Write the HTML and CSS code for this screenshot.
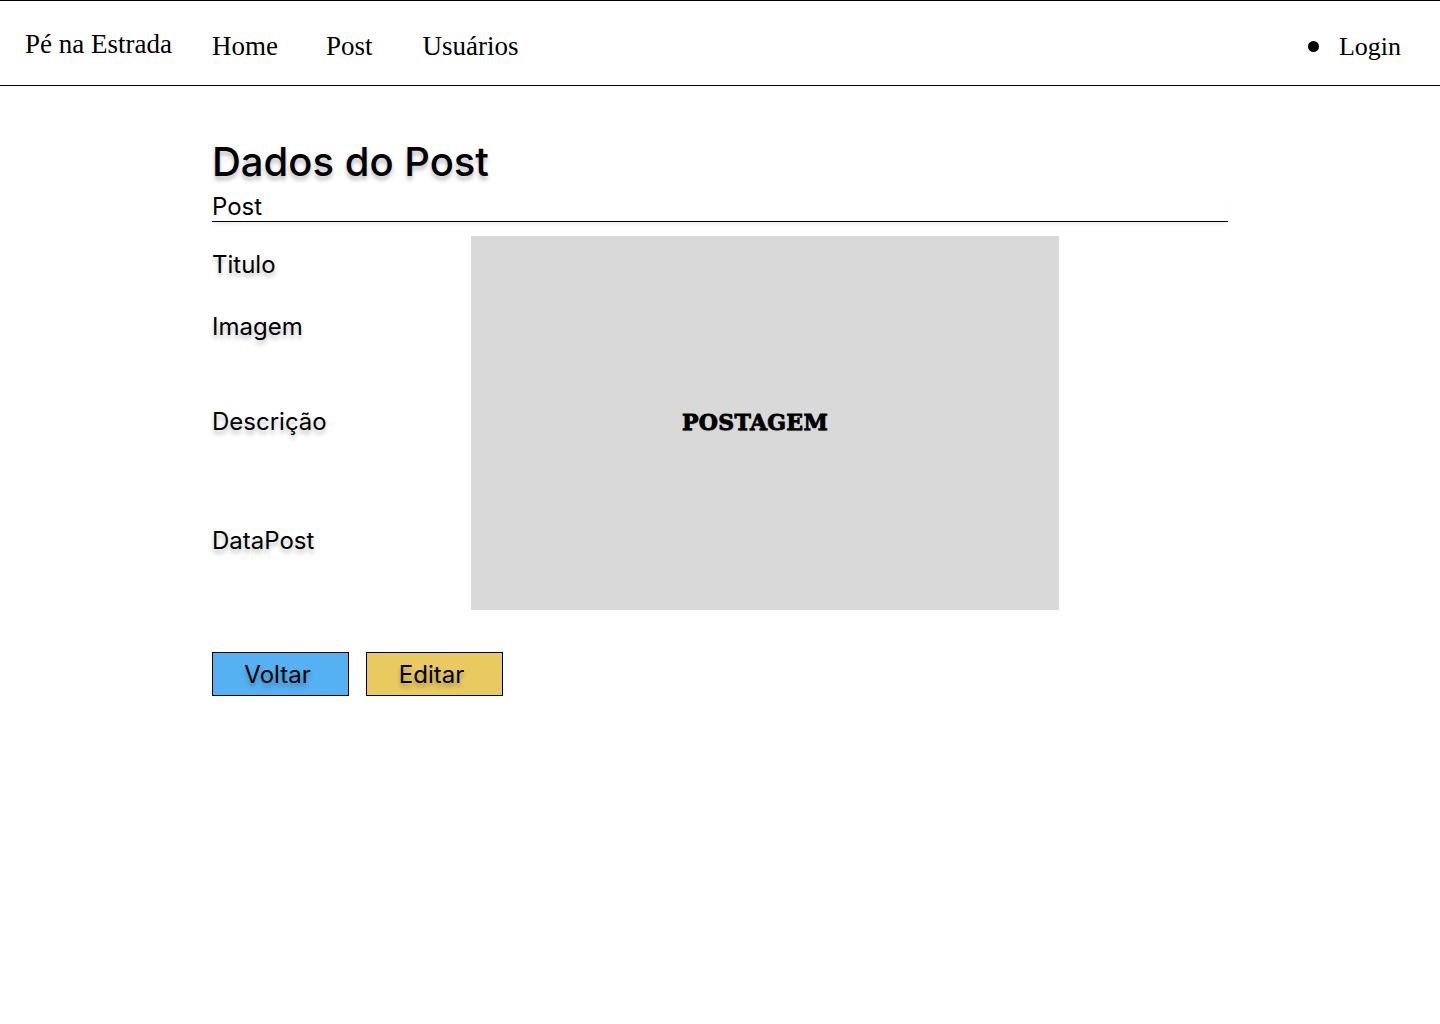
FILE: index.html
```html
<!DOCTYPE html>
<html lang="pt-BR">
<head>
<meta charset="utf-8">
<title>Dados do Post</title>
<link rel="stylesheet" href="styles.css">
</head>
<body>
<header class="topbar">
  <div class="brand">Pé na Estrada</div>
  <nav class="nav">
    <a class="nav-link" href="#">Home</a>
    <a class="nav-link" href="#">Post</a>
    <a class="nav-link" href="#">Usuários</a>
  </nav>
  <div class="login"><span class="dot"></span><span>Login</span></div>
</header>
<main class="content">
  <h1 class="title">Dados do Post</h1>
  <div class="section">Post</div>
  <div class="details">
    <div class="labels">
      <div class="label l-titulo">Titulo</div>
      <div class="label l-imagem">Imagem</div>
      <div class="label l-desc">Descrição</div>
      <div class="label l-data">DataPost</div>
    </div>
    <div class="image-box"><span class="image-text">POSTAGEM</span></div>
  </div>
  <div class="actions">
    <button class="btn btn-back">Voltar</button>
    <button class="btn btn-edit">Editar</button>
  </div>
</main>
</body>
</html>
```
FILE: styles.css
```css
html, body {
  margin: 0;
  padding: 0;
  background: #ffffff;
}
body {
  font-family: Inter, "Noto Sans", sans-serif;
  color: #000;
}
.topbar {
  display: flex;
  align-items: center;
  height: 84px;
  border-top: 1px solid #000;
  border-bottom: 1px solid #000;
  padding: 0 39px 0 25px;
  font-family: "Liberation Serif", serif;
}
.brand {
  font-size: 27px;
  margin-top: 3px;
  width: 187px;
}
.nav {
  display: flex;
  margin-top: 7px;
}
.nav-link {
  font-size: 27px;
  color: #000;
  text-decoration: none;
}
.nav-link:nth-child(1) { margin-right: 48px; }
.nav-link:nth-child(2) { margin-right: 50px; }
.login {
  margin-left: auto;
  margin-top: 7px;
  display: flex;
  align-items: center;
  gap: 20px;
  font-size: 26px;
}
.dot {
  width: 11px;
  height: 11px;
  border-radius: 50%;
  background: #000;
}
.content {
  padding: 0 212px;
}
.title {
  margin: 0;
  padding-top: 52px;
  font-size: 40px;
  font-weight: 500;
  line-height: 48px;
  text-shadow: 0 4px 4px rgba(0, 0, 0, 0.25);
}
.section {
  width: 1016px;
  font-size: 24px;
  line-height: 29px;
  margin-top: 6px;
  border-bottom: 1px solid #000;
  box-shadow: 0 4px 4px -2px rgba(0, 0, 0, 0.08);
}
.details {
  display: flex;
  margin-top: 14px;
}
.labels {
  width: 259px;
}
.label {
  font-size: 24px;
  line-height: 29px;
  text-shadow: 0 4px 4px rgba(0, 0, 0, 0.25);
}
.l-titulo { margin-top: 14px; }
.l-imagem { margin-top: 33px; }
.l-desc { margin-top: 66px; }
.l-data { margin-top: 90px; }
.image-box {
  width: 588px;
  height: 374px;
  background: #d9d9d9;
  display: flex;
  align-items: center;
  justify-content: center;
}
.image-text {
  font-family: "DejaVu Serif", serif;
  font-weight: 900;
  font-size: 22px;
  letter-spacing: 0.3px;
  margin-left: -20px;
  margin-top: -3px;
  -webkit-text-stroke: 0.8px #000;
  text-shadow: 0 1px 1px rgba(0, 0, 0, 0.25);
}
.actions {
  display: flex;
  gap: 17px;
  margin-top: 42px;
}
.btn {
  width: 137px;
  height: 44px;
  border: 1px solid #000;
  font-family: Inter, "Noto Sans", sans-serif;
  font-size: 24px;
  color: #000;
  text-shadow: 0 4px 4px rgba(0, 0, 0, 0.25);
  padding: 0 6px 0 0;
  cursor: pointer;
}
.btn-back { background: #55b1f2; }
.btn-edit { background: #e8ca61; }
```
